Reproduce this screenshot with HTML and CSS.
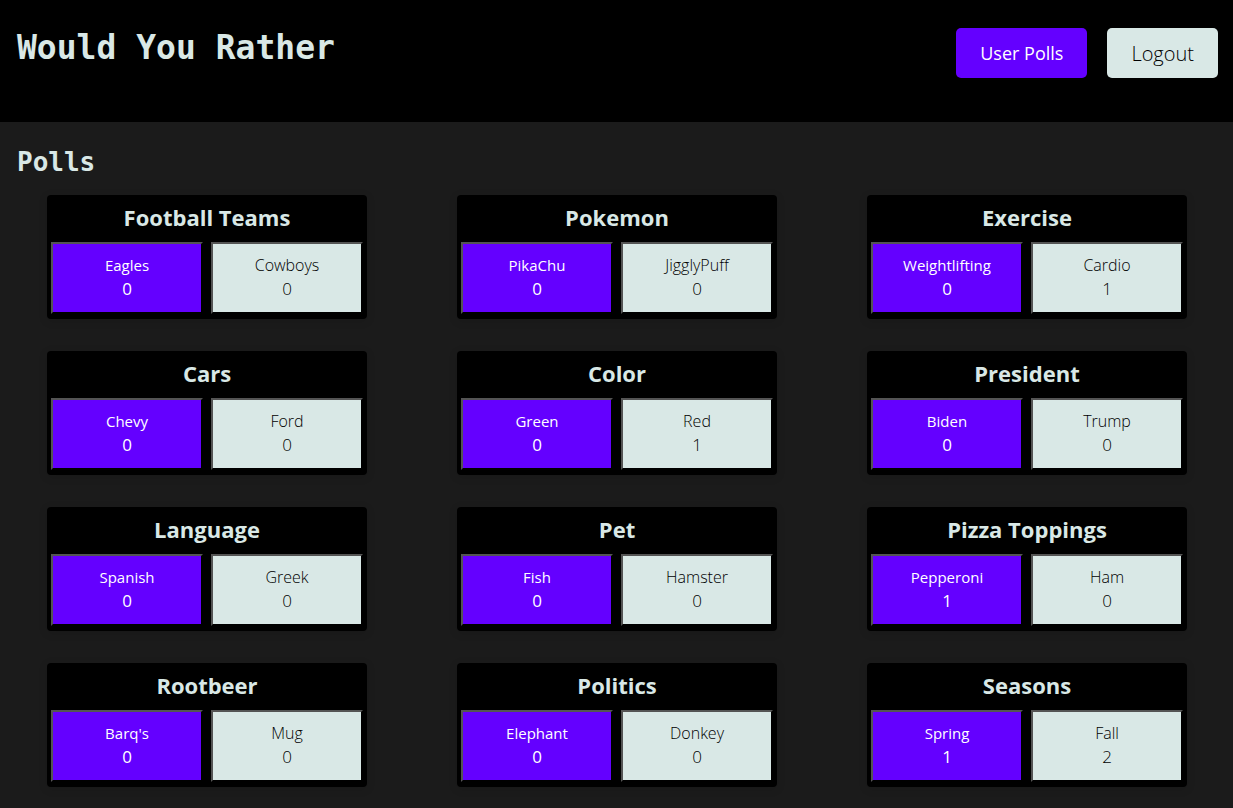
FILE: index.html
```html
<!DOCTYPE html>
<html lang="en">
<head>
<meta charset="utf-8">
<meta name="viewport" content="width=device-width, initial-scale=1">
<title>Would You Rather</title>
<link rel="stylesheet" href="styles.css">
</head>
<body>
<header class="header">
  <h1 class="brand">Would You Rather</h1>
  <nav class="nav">
    <button class="nav-button primary" type="button">User Polls</button>
    <button class="nav-button secondary" type="button">Logout</button>
  </nav>
</header>
<main class="content">
  <h2 class="heading">Polls</h2>
  <div class="polls">
    <section class="card"><h3 class="title">Football Teams</h3><div class="options"><button class="option primary" type="button">Eagles<span class="votes">0</span></button><button class="option secondary" type="button">Cowboys<span class="votes">0</span></button></div></section>
    <section class="card"><h3 class="title">Pokemon</h3><div class="options"><button class="option primary" type="button">PikaChu<span class="votes">0</span></button><button class="option secondary" type="button">JigglyPuff<span class="votes">0</span></button></div></section>
    <section class="card"><h3 class="title">Exercise</h3><div class="options"><button class="option primary" type="button">Weightlifting<span class="votes">0</span></button><button class="option secondary" type="button">Cardio<span class="votes">1</span></button></div></section>
    <section class="card"><h3 class="title">Cars</h3><div class="options"><button class="option primary" type="button">Chevy<span class="votes">0</span></button><button class="option secondary" type="button">Ford<span class="votes">0</span></button></div></section>
    <section class="card"><h3 class="title">Color</h3><div class="options"><button class="option primary" type="button">Green<span class="votes">0</span></button><button class="option secondary" type="button">Red<span class="votes">1</span></button></div></section>
    <section class="card"><h3 class="title">President</h3><div class="options"><button class="option primary" type="button">Biden<span class="votes">0</span></button><button class="option secondary" type="button">Trump<span class="votes">0</span></button></div></section>
    <section class="card"><h3 class="title">Language</h3><div class="options"><button class="option primary" type="button">Spanish<span class="votes">0</span></button><button class="option secondary" type="button">Greek<span class="votes">0</span></button></div></section>
    <section class="card"><h3 class="title">Pet</h3><div class="options"><button class="option primary" type="button">Fish<span class="votes">0</span></button><button class="option secondary" type="button">Hamster<span class="votes">0</span></button></div></section>
    <section class="card"><h3 class="title">Pizza Toppings</h3><div class="options"><button class="option primary" type="button">Pepperoni<span class="votes">1</span></button><button class="option secondary" type="button">Ham<span class="votes">0</span></button></div></section>
    <section class="card"><h3 class="title">Rootbeer</h3><div class="options"><button class="option primary" type="button">Barq's<span class="votes">0</span></button><button class="option secondary" type="button">Mug<span class="votes">0</span></button></div></section>
    <section class="card"><h3 class="title">Politics</h3><div class="options"><button class="option primary" type="button">Elephant<span class="votes">0</span></button><button class="option secondary" type="button">Donkey<span class="votes">0</span></button></div></section>
    <section class="card"><h3 class="title">Seasons</h3><div class="options"><button class="option primary" type="button">Spring<span class="votes">1</span></button><button class="option secondary" type="button">Fall<span class="votes">2</span></button></div></section>
  </div>
</main>
</body>
</html>
```
FILE: styles.css
```css
* {
  box-sizing: border-box;
}

body {
  margin: 0;
  background: #1b1b1b;
  color: #d9e8e6;
  font-family: "Segoe UI", "Open Sans", sans-serif;
}

.header {
  display: flex;
  justify-content: space-between;
  align-items: flex-start;
  padding: 28px 15px 44px 17px;
  background: #000;
}

.brand,
.heading {
  margin: 0;
  font-family: Consolas, "DejaVu Sans Mono", monospace;
  font-weight: 700;
}

.brand {
  font-size: 33px;
  line-height: 40px;
}

.nav {
  display: flex;
  gap: 20px;
}

.nav-button {
  height: 50px;
  padding: 0 24px;
  border: 0;
  border-radius: 5px;
  font-family: inherit;
  font-size: 18px;
}

.nav-button.secondary {
  font-size: 20px;
}

.primary {
  background: #6400ff;
  color: #fff;
  font-weight: 400;
}

.secondary {
  background: #d9e8e6;
  color: #000;
  font-weight: 300;
}

.heading {
  padding: 24px 17px 17px;
  font-size: 26px;
  line-height: 32px;
}

.polls {
  display: grid;
  grid-template-columns: repeat(3, 1fr);
  justify-items: center;
  row-gap: 32px;
  padding: 0 1px 16px 2px;
}

.card {
  width: 320px;
  padding: 4px 4px 5px;
  border-radius: 4px;
  background: #000;
  box-shadow: 0 2px 10px rgba(0, 0, 0, 0.12);
}

.title {
  margin: 0 0 7px;
  font-size: 22px;
  line-height: 36px;
  font-weight: 700;
  text-align: center;
}

.options {
  display: grid;
  grid-template-columns: 1fr 1fr;
  gap: 8px;
}

.option {
  padding: 10px 4px 12px;
  border: 2px outset #000;
  font-family: inherit;
  font-size: 15px;
  line-height: 23px;
}

.option.secondary {
  font-size: 16px;
}

.option .votes {
  display: block;
  font-size: 17px;
}
```
